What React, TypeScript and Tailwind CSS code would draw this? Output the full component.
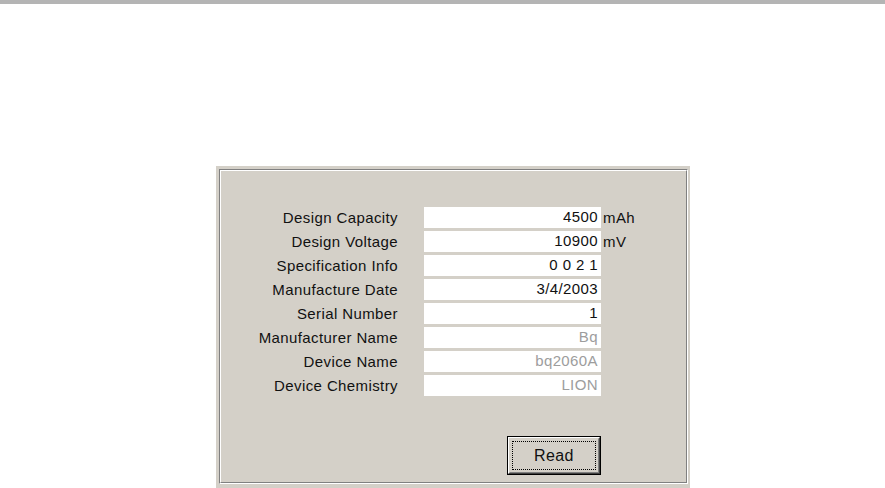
import React from 'react';

type Field = { label: string; value: string; unit?: string; disabled?: boolean };

const fields: Field[] = [
  { label: 'Design Capacity', value: '4500', unit: 'mAh' },
  { label: 'Design Voltage', value: '10900', unit: 'mV' },
  { label: 'Specification Info', value: '0 0 2 1' },
  { label: 'Manufacture Date', value: '3/4/2003' },
  { label: 'Serial Number', value: '1' },
  { label: 'Manufacturer Name', value: 'Bq', disabled: true },
  { label: 'Device Name', value: 'bq2060A', disabled: true },
  { label: 'Device Chemistry', value: 'LION', disabled: true },
];

export default function App() {
  return (
    <div className="w-[885px] h-[488px] bg-white overflow-hidden font-['Liberation_Sans',Arial,sans-serif] text-[15px] tracking-[0.4px] text-[#111]">
      <div className="h-[4px] bg-[#b4b4b4]" />

      {/* battery info panel */}
      <div className="ml-[216px] mt-[162px] w-[474px] h-[330px] bg-[#d4d0c8] pt-[3px] pl-[3px] pr-[2px]">
        <div className="h-[315px] border border-t-[#808080] border-l-[#808080] border-r-white border-b-white">
          <div className="h-full border border-t-white border-l-white border-r-[#808080] border-b-[#808080] pt-[36px]">
            <div className="flex flex-col gap-[3px]">
              {fields.map(f => (
                <div key={f.label} className="flex items-center h-[21px]">
                  <div className="w-[178px] text-right leading-[20px] pr-[1px]">{f.label}</div>
                  <div
                    className={`ml-[25px] w-[177px] h-[21px] bg-white text-right pr-[3px] leading-[20px] ${
                      f.disabled ? 'text-[#9d9d9d]' : 'text-[#111]'
                    }`}
                  >
                    {f.value}
                  </div>
                  {f.unit && <div className="ml-[2px] leading-[20px]">{f.unit}</div>}
                </div>
              ))}
            </div>

            <div className="flex mt-[40px]">
              <div className="w-[178px]" />
              <div className="ml-[25px] w-[177px] flex justify-end">
                <button className="w-[94px] h-[39px] border border-black bg-[#d4d0c8] p-0">
                  <div className="h-full border border-t-white border-l-white border-r-[#404040] border-b-[#404040]">
                    <div className="h-full border border-t-[#d4d0c8] border-l-[#d4d0c8] border-r-[#808080] border-b-[#808080] p-[2px]">
                      <div className="h-full border border-dotted border-black flex items-center justify-center leading-none text-[16px]">
                        Read
                      </div>
                    </div>
                  </div>
                </button>
              </div>
            </div>
          </div>
        </div>
      </div>
    </div>
  );
}
